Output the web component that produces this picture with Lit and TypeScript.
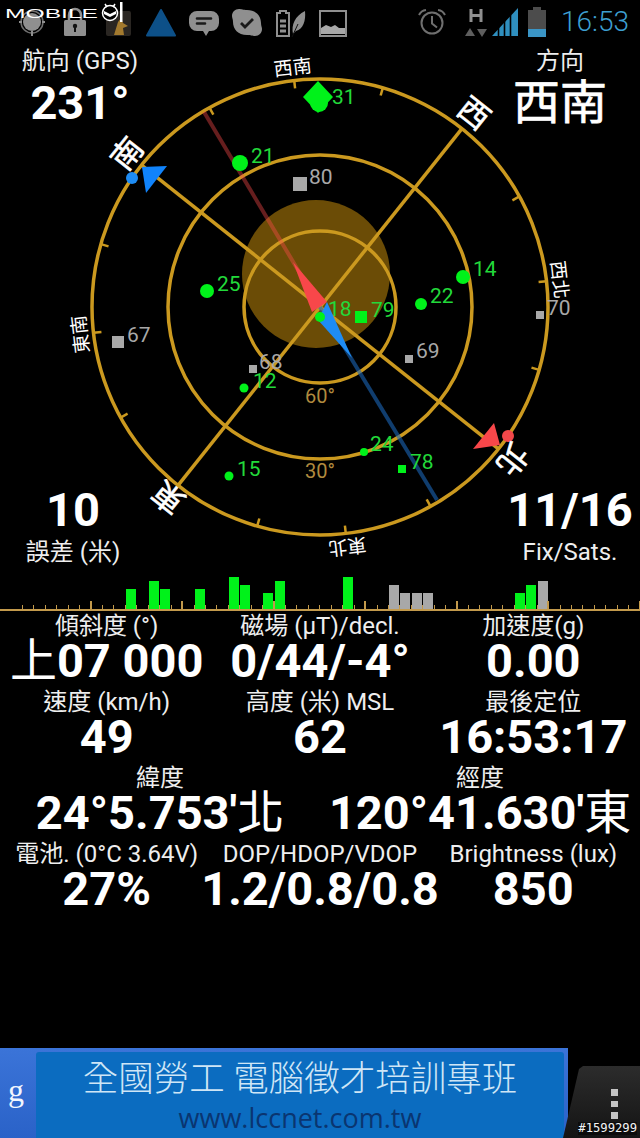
import { LitElement, css, html, svg } from 'lit';
import { customElement } from 'lit/decorators.js';

const GREEN = '#00f21a';
const LABEL_GREEN = '#22d93a';
const GREY = '#a8a8a8';
const GOLD = '#cb991f';
const CX = 320;
const CY = 307;
const ROTATION = 128.5;

// x, y = marker centre, size = radius or side, lx, ly = label start
const sats = [
  { id: '21', x: 240, y: 163, size: 8, round: true, on: true, lx: 251, ly: 156 },
  { id: '80', x: 300, y: 184, size: 14, round: false, on: false, lx: 309, ly: 177 },
  { id: '25', x: 207, y: 291, size: 7, round: true, on: true, lx: 217, ly: 284 },
  { id: '14', x: 463, y: 277, size: 7, round: true, on: true, lx: 473, ly: 269 },
  { id: '70', x: 540, y: 315, size: 8, round: false, on: false, lx: 547, ly: 308 },
  { id: '67', x: 118, y: 342, size: 12, round: false, on: false, lx: 127, ly: 335 },
  { id: '22', x: 421, y: 304, size: 6, round: true, on: true, lx: 430, ly: 296 },
  { id: '18', x: 320, y: 317, size: 5, round: true, on: true, lx: 328, ly: 309 },
  { id: '79', x: 361, y: 317, size: 12, round: false, on: true, lx: 371, ly: 310 },
  { id: '69', x: 409, y: 359, size: 8, round: false, on: false, lx: 416, ly: 351 },
  { id: '68', x: 253, y: 369, size: 8, round: false, on: false, lx: 259, ly: 362 },
  { id: '12', x: 244, y: 388, size: 4.5, round: true, on: true, lx: 253, ly: 381 },
  { id: '24', x: 364, y: 452, size: 4, round: true, on: true, lx: 370, ly: 444 },
  { id: '78', x: 402, y: 469, size: 8, round: false, on: true, lx: 410, ly: 462 },
  { id: '15', x: 229, y: 476, size: 4.5, round: true, on: true, lx: 237, ly: 469 },
];

const compassLabels = [
  { text: '北', angle: ROTATION, r: 245, major: true },
  { text: '西', angle: ROTATION - 90, r: 247, major: true },
  { text: '南', angle: ROTATION - 180, r: 246, major: true },
  { text: '東', angle: ROTATION + 90, r: 243, major: true },
  { text: '西南', angle: ROTATION - 135, r: 241, major: false },
  { text: '西北', angle: ROTATION - 45, r: 241, major: false },
  { text: '東北', angle: ROTATION + 45, r: 241, major: false },
  { text: '東南', angle: ROTATION + 135, r: 241, major: false },
];

// slot index -> bar
const bars: Record<number, { h: number; on: boolean }> = {
  10: { h: 20, on: true },
  12: { h: 28, on: true },
  13: { h: 20, on: true },
  16: { h: 20, on: true },
  19: { h: 32, on: true },
  20: { h: 24, on: true },
  22: { h: 16, on: true },
  23: { h: 28, on: true },
  29: { h: 32, on: true },
  33: { h: 24, on: false },
  34: { h: 16, on: false },
  35: { h: 16, on: false },
  36: { h: 16, on: false },
  44: { h: 16, on: true },
  45: { h: 24, on: true },
  46: { h: 28, on: false },
};

const stats = [
  [
    ['傾斜度 (°)', '上07 000'],
    ['磁場 (µT)/decl.', '0/44/-4°'],
    ['加速度(g)', '0.00'],
  ],
  [
    ['速度 (km/h)', '49'],
    ['高度 (米) MSL', '62'],
    ['最後定位', '16:53:17'],
  ],
  [
    ['緯度', "24°5.753'北"],
    ['經度', "120°41.630'東"],
  ],
  [
    ['電池. (0°C 3.64V)', '27%'],
    ['DOP/HDOP/VDOP', '1.2/0.8/0.8'],
    ['Brightness (lux)', '850'],
  ],
];

@customElement('app-root')
export class AppRoot extends LitElement {
  static styles = css`
    :host {
      display: flex;
      flex-direction: column;
      position: relative;
      width: 640px;
      height: 1138px;
      overflow: hidden;
      background: #000;
      color: #fff;
      font-family: Roboto, 'Noto Sans CJK TC', sans-serif;
    }
    .status {
      display: flex;
      align-items: center;
      height: 44px;
      padding-left: 10px;
      flex: none;
    }
    .slot {
      width: 43px;
      height: 30px;
      display: flex;
      justify-content: center;
    }
    .slot svg {
      width: 32px;
      height: 30px;
    }
    .status-right {
      display: flex;
      align-items: center;
      margin-left: auto;
      padding-right: 11px;
    }
    .alarm {
      width: 30px;
      height: 30px;
      margin-right: 17px;
    }
    .net {
      width: 24px;
      height: 30px;
      margin-right: 3px;
    }
    .signal {
      width: 28px;
      height: 30px;
      margin-right: 8px;
    }
    .battery {
      width: 20px;
      height: 30px;
      margin-right: 14px;
    }
    .time {
      font-size: 28px;
      font-weight: 300;
      color: #3d9fd0;
      line-height: 30px;
    }
    .mark {
      position: absolute;
      left: 4px;
      top: 1px;
      width: 122px;
      height: 24px;
    }
    .compass {
      display: grid;
      flex: none;
      height: 526px;
    }
    .compass > * {
      grid-area: 1 / 1;
    }
    .dial {
      display: block;
      width: 640px;
      height: 526px;
    }
    .corners {
      display: flex;
      flex-direction: column;
      justify-content: space-between;
      padding-top: 2px;
      padding-bottom: 3px;
    }
    .corner-row {
      display: flex;
      justify-content: space-between;
    }
    .readout {
      display: flex;
      flex-direction: column;
      align-items: center;
      width: 160px;
    }
    .readout.err {
      width: 146px;
    }
    .readout.fix {
      width: 140px;
    }
    .cap {
      font-size: 24px;
      line-height: 30px;
      color: #eee;
    }
    .big {
      font-size: 47px;
      line-height: 54px;
      font-weight: 700;
    }
    .big.cjk {
      font-weight: 400;
      -webkit-text-stroke: 0.7px #fff;
    }
    .sat-label {
      font-size: 21px;
      dominant-baseline: central;
    }
    .ring {
      fill: none;
      stroke: #cb991f;
      stroke-width: 3.5;
    }
    .dir {
      fill: #fff;
      text-anchor: middle;
      dominant-baseline: central;
    }
    .dir.major {
      font-size: 31px;
      stroke: #fff;
      stroke-width: 0.6px;
    }
    .dir.minor {
      font-size: 19px;
    }
    .elev {
      font-size: 20px;
      fill: #b08a3e;
      text-anchor: middle;
      dominant-baseline: central;
    }
    .hist {
      display: flex;
      align-items: flex-end;
      flex: none;
      height: 41px;
      padding-left: 11.5px;
      border-bottom: 2px solid #c39a4c;
      box-sizing: border-box;
    }
    .cell {
      position: relative;
      flex: 0 0 11.45px;
      height: 100%;
    }
    .cell::after {
      content: '';
      position: absolute;
      right: 0;
      bottom: 0;
      width: 1px;
      height: 4px;
      background: #c39a4c;
    }
    .cell.tall::after {
      width: 2px;
      height: 8px;
    }
    .bar {
      position: absolute;
      left: 0;
      bottom: 0;
      width: 10px;
    }
    .stats {
      display: flex;
      flex-direction: column;
      gap: 6px;
      padding-top: 2px;
    }
    .row {
      display: grid;
      grid-template-columns: repeat(3, minmax(0, 1fr));
    }
    .row.two {
      grid-template-columns: repeat(2, minmax(0, 1fr));
    }
    .stat {
      display: flex;
      flex-direction: column;
      align-items: center;
      white-space: nowrap;
    }
    .stat-cap {
      font-size: 24px;
      line-height: 26px;
      color: #eee;
    }
    .stat-val {
      font-size: 47px;
      line-height: 44px;
      font-weight: 700;
    }
    .stat-val em {
      font-style: normal;
      font-weight: 400;
    }
    .foot {
      display: flex;
      align-items: flex-end;
      margin-top: auto;
      height: 90px;
      flex: none;
    }
    .ad {
      display: flex;
      width: 568px;
      height: 90px;
      padding: 4px 4px 0 0;
      box-sizing: border-box;
      background: linear-gradient(#3b74d8, #2a62c8);
    }
    .g {
      width: 32px;
      padding-top: 18px;
      text-align: center;
      font-family: 'Liberation Serif', serif;
      font-size: 32px;
      line-height: 40px;
      color: #f2f6fe;
      flex: none;
    }
    .banner {
      flex: 1;
      margin-left: 4px;
      display: flex;
      flex-direction: column;
      align-items: center;
      border-radius: 3px 3px 0 0;
      background: #0b6cc0;
    }
    .banner-title {
      font-size: 35.5px;
      line-height: 44px;
      padding-top: 5px;
      color: #cfe6f6;
      font-weight: 300;
      white-space: pre;
    }
    .banner-url {
      font-size: 27px;
      line-height: 34px;
      color: #0a3570;
      font-family: 'Open Sans', sans-serif;
    }
    .tab {
      position: relative;
      display: flex;
      flex-direction: column;
      align-items: center;
      gap: 5px;
      flex: 1;
      height: 72px;
      margin-left: -5px;
      padding: 23px 0 0 26px;
      box-sizing: border-box;
      background: linear-gradient(#2c2c2c, #141414);
      clip-path: polygon(0 100%, 16px 3px, 20px 0, 100% 0, 100% 100%);
    }
    .tab i {
      display: block;
      width: 6.5px;
      height: 6.5px;
      background: #c4c4c4;
    }
    .stamp {
      position: absolute;
      right: 3px;
      bottom: 3px;
      font-family: 'DejaVu Sans Mono', monospace;
      font-size: 12.2px;
      line-height: 13px;
      color: #f4f4f4;
      background: rgba(0, 0, 0, 0.45);
    }
  `;

  private renderStatusLeft() {
    const g = '#8f8f8f';
    const icons = [
      svg`<circle cx="16" cy="15" r="9" fill="${g}" /><circle cx="16" cy="15" r="11" fill="none" stroke="#6e6e6e" stroke-width="1.5" />
        <path d="M16 24v5M3 15h3M26 15h3" stroke="${g}" stroke-width="2" />`,
      svg`<rect x="5" y="13" width="22" height="16" rx="1.5" fill="${g}" /><path d="M10 13V8a6 6 0 0 1 12 0v5" fill="none" stroke="${g}" stroke-width="2.5" />
        <circle cx="16" cy="19" r="2.2" fill="#111" /><rect x="15" y="19" width="2" height="6" fill="#111" />`,
      svg`<rect x="4" y="4" width="25" height="25" rx="2" fill="#2a2622" /><path d="M12 28l4-13 3-4 2 5 5 3-5 2 1 7z" fill="#a37a2e" />`,
      svg`<path d="M16 3L30 28.5H2z" fill="#0d5088" stroke="#0d5088" stroke-width="2" stroke-linejoin="round" />`,
      svg`<path d="M9 4h14a8 8 0 0 1 8 8v4a8 8 0 0 1-8 8h-2l-3 5-3-5H9a8 8 0 0 1-8-8v-4a8 8 0 0 1 8-8z" fill="${g}" />
        <path d="M9 11.5h14M9 16.5h8" stroke="#1a1a1a" stroke-width="2.6" stroke-linecap="round" />`,
      svg`<path d="M8 2c3 0 4 1 8 1 9 0 14 6 14 13 0 3 1 4 1 6 0 4-3 7-7 7-3 0-4-1-8-1-9 0-14-6-14-13 0-3-1-4-1-6 0-4 3-7 7-7z" fill="${g}" />
        <path d="M10 16l4 4 8-8" fill="none" stroke="#1a1a1a" stroke-width="2.8" />`,
      svg`<path d="M3 6h3V4h6v2h3v23H3z" fill="none" stroke="${g}" stroke-width="2" />
        <path d="M6 14h6M6 19h6M6 24h6" stroke="${g}" stroke-width="3" />
        <path d="M19 27c-2-9 2-18 12-23 1 10-2 18-9 20z" fill="${g}" /><path d="M18 30l6-13" stroke="#111" stroke-width="1" />`,
      svg`<rect x="3" y="4" width="26" height="25" fill="none" stroke="${g}" stroke-width="2" />
        <path d="M4 27v-6l5-3 5 2 4-2 4 3h6v6z" fill="#a8a8a8" />`,
    ];
    return icons.map(
      (icon) => html`<div class="slot"><svg viewBox="0 0 32 30">${icon}</svg></div>`,
    );
  }

  private renderStatusRight() {
    return html`<div class="status-right">
      <svg class="alarm" viewBox="0 0 30 30">
        <circle cx="15" cy="16" r="10.5" fill="none" stroke="#6f6f6f" stroke-width="2" />
        <path d="M15 9v7.5l5 4" fill="none" stroke="#6f6f6f" stroke-width="2" />
        <path d="M2 8a9 9 0 0 1 7-5M28 8a9 9 0 0 0-7-5" fill="none" stroke="#6f6f6f" stroke-width="2" />
      </svg>
      <svg class="net" viewBox="0 0 24 30">
        <path d="M7 2v13M17 2v13M7 8.5h10" stroke="#8f8f8f" stroke-width="3" fill="none" />
        <path d="M6 21l5 8H1z" fill="#5e5e5e" />
        <path d="M13 22h10l-5 8z" fill="#5e5e5e" />
      </svg>
      <svg class="signal" viewBox="0 0 28 30">
        <path d="M1 29L27 1v28z" fill="#2f8fbf" />
        <path d="M7.5 29V20M13.5 29V14M19.5 29V8" stroke="#000" stroke-width="1.6" />
      </svg>
      <svg class="battery" viewBox="0 0 20 30">
        <rect x="6" y="0" width="8" height="3" fill="#4c4c4c" />
        <rect x="1" y="3" width="18" height="19" fill="#4c4c4c" />
        <rect x="1" y="22" width="18" height="8" fill="#3a95c6" />
      </svg>
      <span class="time">16:53</span>
    </div>`;
  }

  private renderDial() {
    const ticks = [];
    for (let k = 0; k < 16; k++) {
      if (k % 4 === 0) continue;
      ticks.push(svg`<line x1=${CX} y1=${CY - 228} x2=${CX} y2=${CY - 220} stroke=${GOLD} stroke-width="2.5"
        transform="rotate(${ROTATION + k * 22.5} ${CX} ${CY})" />`);
    }
    return html`<svg class="dial" viewBox="0 44 640 526">
      <circle cx="316" cy="274" r="74" fill="#6b4c06" />
      <circle class="ring" cx=${CX} cy=${CY} r="76" />
      <circle class="ring" cx=${CX} cy=${CY} r="152" />
      <circle class="ring" cx=${CX} cy=${CY} r="228" />
      ${[0, 90].map(
        (a) => svg`<line x1=${CX} y1=${CY - 228} x2=${CX} y2=${CY + 228} stroke=${GOLD} stroke-width="3.5"
          transform="rotate(${ROTATION + a} ${CX} ${CY})" />`,
      )}
      ${ticks}
      <line x1="204" y1="112" x2="320" y2="307" stroke="#ff4a4a" stroke-opacity="0.4" stroke-width="4" />
      <line x1="437" y1="500" x2="320" y2="307" stroke="#1a66b8" stroke-opacity="0.6" stroke-width="4" />
      <text class="elev" x="320" y="396">60°</text>
      <text class="elev" x="320" y="471">30°</text>
      <path d="M293 262L327 302 312 312z" fill="#f8474a" />
      <path d="M352 358L327 302 318 320z" fill="#1e8cf4" />
      <path d="M318 81l15 16-15 16-15-16z" fill=${GREEN} />
      <circle cx="319" cy="103" r="9" fill=${GREEN} />
      <text class="sat-label" x="332" y="97" fill=${LABEL_GREEN}>31</text>
      ${sats.map((s) => this.renderSat(s))}
      <circle cx="132" cy="178" r="6" fill="#1e8cf4" />
      <path d="M167 166L142 167 146 193z" fill="#1083fb" />
      <circle cx="508" cy="436" r="6" fill="#f2474a" />
      <path d="M494 423L473 449 500 445z" fill="#f8474a" />
      ${compassLabels.map(
        (l) => svg`<text class="dir ${l.major ? 'major' : 'minor'}" x=${CX} y=${CY - l.r}
          transform="rotate(${l.angle} ${CX} ${CY})">${l.text}</text>`,
      )}
    </svg>`;
  }

  private renderSat(s: (typeof sats)[number]) {
    const fill = s.on ? GREEN : GREY;
    const marker = s.round
      ? svg`<circle cx=${s.x} cy=${s.y} r=${s.size} fill=${fill} />`
      : svg`<rect x=${s.x - s.size / 2} y=${s.y - s.size / 2} width=${s.size} height=${s.size} fill=${fill} />`;
    return svg`${marker}<text class="sat-label" x=${s.lx} y=${s.ly} fill=${s.on ? LABEL_GREEN : GREY}>${s.id}</text>`;
  }

  private renderHist() {
    const cells = [];
    for (let i = 0; i < 55; i++) {
      const bar = bars[i];
      cells.push(html`<div class="cell ${i % 8 === 6 ? 'tall' : ''}">
        ${bar
          ? html`<div class="bar" style="height:${bar.h}px;background:${bar.on ? GREEN : GREY}"></div>`
          : ''}
      </div>`);
    }
    return html`<div class="hist">${cells}</div>`;
  }

  // the CJK letters in the values are drawn at regular weight
  private renderValue(val: string) {
    return val
      .split(/([上北東])/)
      .map((part) => (/[上北東]/.test(part) ? html`<em>${part}</em>` : part));
  }

  render() {
    return html`
      <div class="status">${this.renderStatusLeft()} ${this.renderStatusRight()}</div>
      <svg class="mark" viewBox="0 0 122 24">
        <text x="1" y="17" font-family="Liberation Sans" font-size="13" fill="#fff" textLength="93" lengthAdjust="spacingAndGlyphs">MOBILE</text>
        <circle cx="106" cy="12" r="7.5" fill="#000" stroke="#fff" stroke-width="1.5" />
        <path d="M100 10l6 3 6-3v3l-6 3-6-3z" fill="#fff" />
        <path d="M101 3l2 3M111 3l-2 3" stroke="#fff" stroke-width="1.5" />
        <rect x="116" y="1" width="2.5" height="20" fill="#fff" />
      </svg>
      <div class="compass">
        ${this.renderDial()}
        <div class="corners">
          <div class="corner-row">
            <div class="readout"><span class="cap">航向 (GPS)</span><span class="big">231°</span></div>
            <div class="readout"><span class="cap">方向</span><span class="big cjk">西南</span></div>
          </div>
          <div class="corner-row">
            <div class="readout err"><span class="big">10</span><span class="cap">誤差 (米)</span></div>
            <div class="readout fix"><span class="big">11/16</span><span class="cap">Fix/Sats.</span></div>
          </div>
        </div>
      </div>
      ${this.renderHist()}
      <div class="stats">
        ${stats.map(
          (row) => html`<div class="row ${row.length === 2 ? 'two' : ''}">
            ${row.map(
              ([cap, val]) => html`<div class="stat">
                <span class="stat-cap">${cap}</span><span class="stat-val">${this.renderValue(val)}</span>
              </div>`,
            )}
          </div>`,
        )}
      </div>
      <div class="foot">
        <div class="ad">
          <div class="g">g</div>
          <div class="banner">
            <div class="banner-title">全國勞工 電腦徵才培訓專班</div>
            <div class="banner-url">www.lccnet.com.tw</div>
          </div>
        </div>
        <div class="tab"><i></i><i></i><i></i></div>
      </div>
      <div class="stamp">#1599299</div>
    `;
  }
}
